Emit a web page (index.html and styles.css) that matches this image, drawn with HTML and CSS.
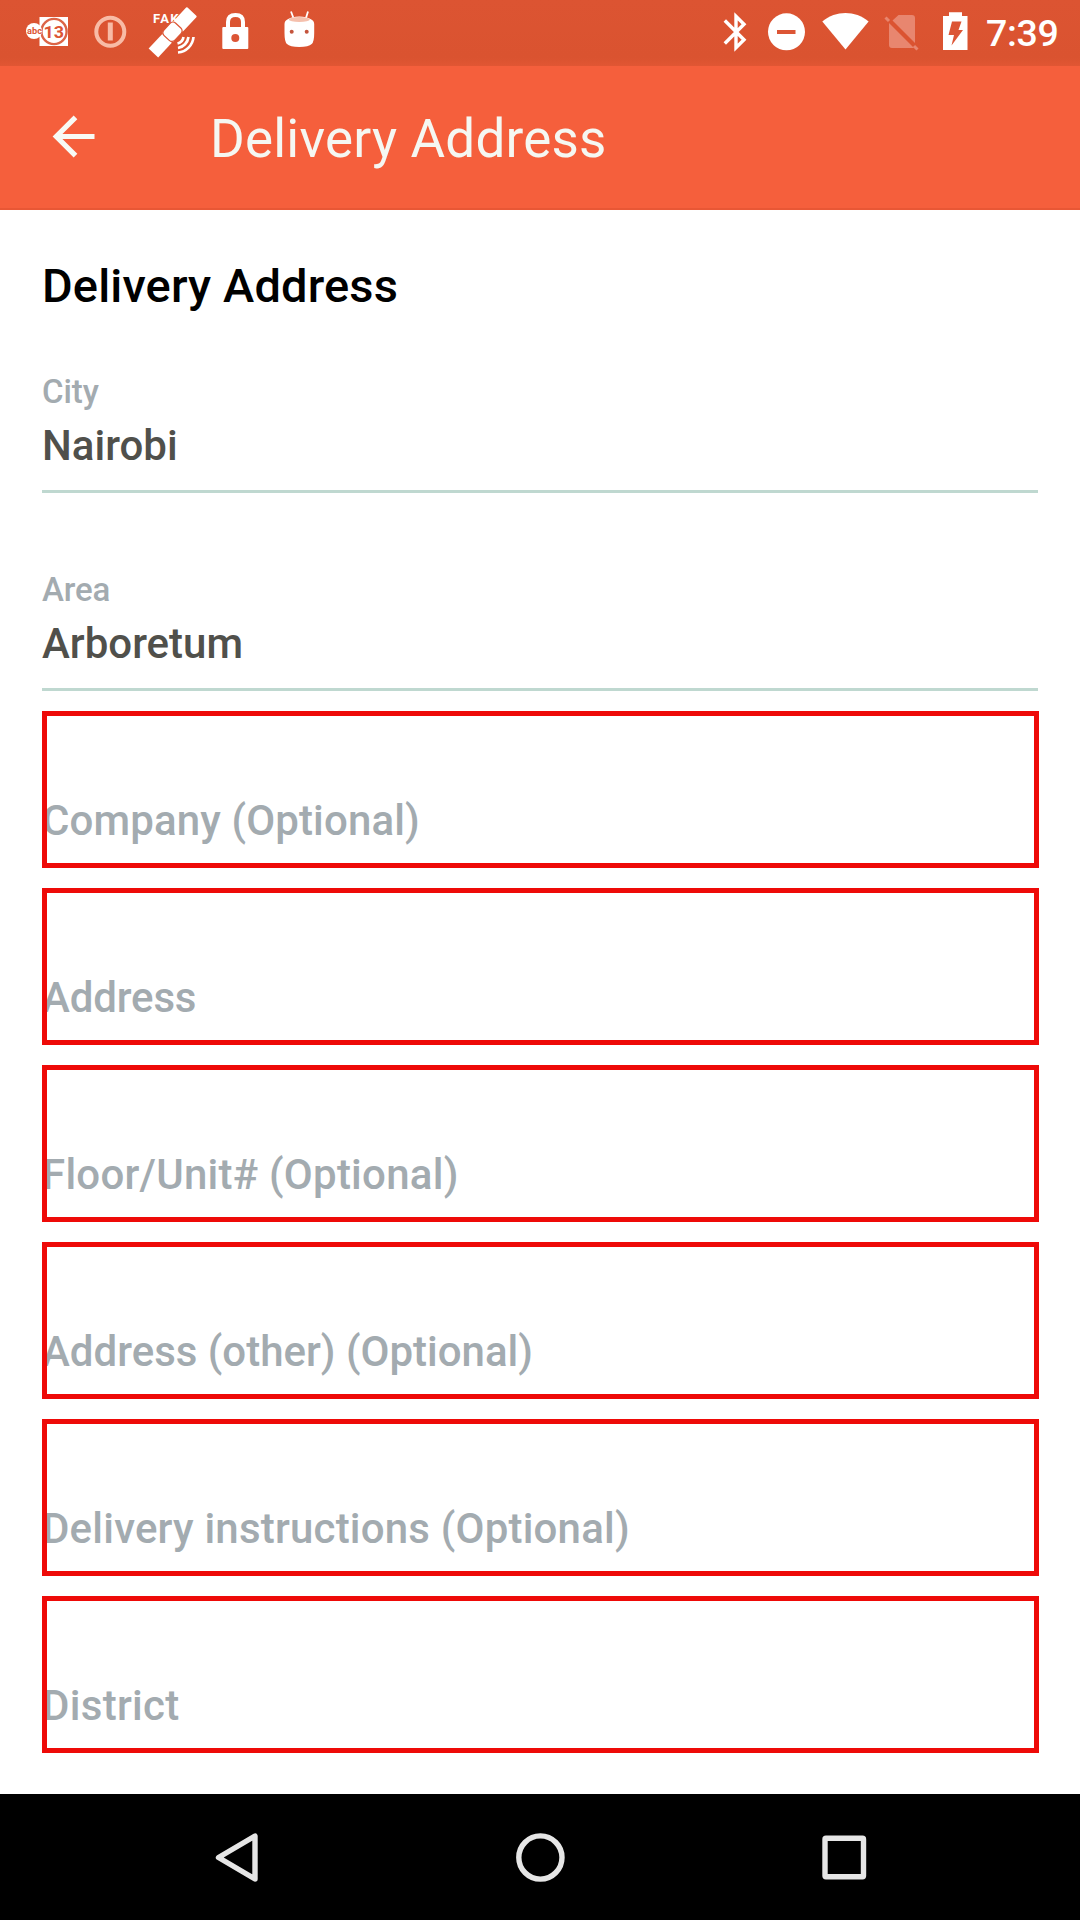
FILE: index.html
```html
<!DOCTYPE html>
<html lang="en">
<head>
<meta charset="utf-8">
<title>Delivery Address</title>
<link rel="stylesheet" href="styles.css">
</head>
<body>
<div class="screen">
  <div class="status-bar">
    <div class="status-group notifications">
      <svg width="60" height="66" viewBox="20 0 60 66">
        <rect x="39.5" y="17" width="28.5" height="29" fill="#fff"/>
        <circle cx="54" cy="31.5" r="12.6" fill="#fff" stroke="#dc6547" stroke-width="2.4"/>
        <circle cx="34" cy="31" r="8" fill="#fff"/>
        <text class="logo-abc" x="27" y="34" textLength="15" lengthAdjust="spacingAndGlyphs">abc</text>
        <text class="logo-num" x="43.500" y="37.5" textLength="20.500" lengthAdjust="spacingAndGlyphs">13</text>
      </svg>
      <svg width="60" height="66" viewBox="80 0 60 66" fill="none" stroke="#f8bba6">
        <circle cx="110.3" cy="31.7" r="14" stroke-width="4"/>
        <path d="M110.3 22.5v18" stroke-width="5"/>
      </svg>
      <svg width="65" height="66" viewBox="140 0 65 66">
        <text class="fake" x="153" y="23" textLength="34">FAKE</text>
        <g transform="translate(172.5 32.5) rotate(-47)">
          <rect x="-28" y="-6.500" width="20" height="13" fill="#fff"/>
          <rect x="7.500" y="-7" width="21" height="14" rx="1" fill="#fff"/>
          <rect x="-8" y="-8" width="17" height="15" rx="4" fill="#fff" stroke="#dc5535" stroke-width="1.200"/>
        </g>
        <path d="M177.500 43.500a8 8 0 0 0 6-6.500M178 48a13 13 0 0 0 10.500-11M178 52.500a17 17 0 0 0 15.500-15.500" fill="none" stroke="#fff" stroke-width="2.700"/>
      </svg>
      <svg width="60" height="66" viewBox="205 0 60 66">
        <path d="M228 29v-7q0-7 7.500-7t7.500 7v7" fill="none" stroke="#fff" stroke-width="4"/>
        <rect x="222.300" y="27" width="26" height="22" rx="1" fill="#fff"/>
        <circle cx="235.300" cy="38" r="4" fill="#dc5535"/>
      </svg>
      <svg width="70" height="66" viewBox="265 0 70 66">
        <path d="M291 11.500l3 8M308 11.500l-2.500 8" stroke="#fff" stroke-width="1.800"/>
        <path d="M284.500 24q0-6.500 14.800-7.500q14.900 1 14.900 7.500v9q0 9-2.500 11q-3 3-12.400 3t-12.300-3q-2.500-2-2.500-11z" fill="#fff"/>
        <ellipse cx="299.300" cy="19.500" rx="10.500" ry="2.600" fill="#f5c0ad"/>
        <circle cx="291.700" cy="31.700" r="2" fill="#c4543c"/><circle cx="306.700" cy="31.700" r="2" fill="#c4543c"/>
      </svg>
    </div>
    <div class="status-group">
      <svg width="45" height="66" viewBox="720 0 45 66" fill="none" stroke="#fff" stroke-width="3.400">
        <path d="M724.800 20.500L744 39.800L736 47.600V16.400L744 24.200L724.800 43.500"/>
      </svg>
      <svg width="50" height="66" viewBox="765 0 50 66">
        <circle cx="786.500" cy="31.800" r="18.500" fill="#fff"/><rect x="777" y="30" width="18.500" height="4" fill="#dc5535"/>
      </svg>
      <svg width="60" height="66" viewBox="815 0 60 66">
        <path d="M822.300 21.500C836 10.300 855 10.300 868.600 21.500L845.500 49.500z" fill="#fff"/>
      </svg>
      <svg width="55" height="66" viewBox="875 0 55 66">
        <path d="M898.500 15H912q3 0 3 3v25L892.500 20.500zM889 23L914 48H892q-3 0-3-3z" fill="#e8866f"/>
        <path d="M885.500 17.500L889 21M914 46L917.500 49.500" stroke="#e8866f" stroke-width="3"/>
      </svg>
      <svg width="55" height="66" viewBox="930 0 55 66">
        <path d="M949 12.300h13v3.700h5.500v34H943V16h6z" fill="#fff"/>
        <path d="M952 21.500h9.500l-3 8.500h4.500l-11.500 15.500l2.500-10.500h-5.500z" fill="#dc5535"/>
      </svg>
      <span class="clock">7:39</span>
    </div>
  </div>

  <header class="app-bar">
    <svg class="back" width="44" height="44" viewBox="0 0 44 44" fill="none" stroke="#f8faf5" stroke-width="5.200">
      <path d="M23.500 2.300L4.300 21.500L23.500 40.700M4 21.500h38.500"/>
    </svg>
    <h1 class="title">Delivery Address</h1>
  </header>

  <main class="content">
    <h2 class="heading">Delivery Address</h2>
    <div class="field"><span class="label">City</span><span class="value">Nairobi</span></div>
    <div class="field"><span class="label">Area</span><span class="value">Arboretum</span></div>
    <div class="inputs">
      <div class="input company">Company (Optional)</div>
      <div class="input address">Address</div>
      <div class="input floor">Floor/Unit# (Optional)</div>
      <div class="input">Address (other) (Optional)</div>
      <div class="input instructions">Delivery instructions (Optional)</div>
      <div class="input district">District</div>
    </div>
  </main>

  <nav class="nav-bar">
    <svg width="60" height="60" viewBox="206 1827 60 60"><path d="M218.500 1857.500L255 1836V1879z"/></svg>
    <svg width="60" height="60" viewBox="510 1827 60 60"><circle cx="540.400" cy="1857.500" r="21.600"/></svg>
    <svg width="60" height="60" viewBox="814 1827 60 60"><rect x="825" y="1838.300" width="38.500" height="38.500" rx="1"/></svg>
  </nav>
</div>
</body>
</html>
```
FILE: styles.css
```css
* { box-sizing: border-box; }
body { margin: 0; font-family: Roboto, "Liberation Sans", sans-serif; background: #fff; }
svg { display: block; flex: none; }
.screen { width: 1080px; height: 1920px; display: flex; flex-direction: column; overflow: hidden; }

.status-bar {
  height: 66px; padding: 0 20px; display: flex; justify-content: space-between;
  background: linear-gradient(#dc5432 0, #da5330 58px, #e15633 66px);
}
.status-group { display: flex; }
.clock { width: 75px; padding-left: 1px; color: #fff; font-size: 37.5px; font-weight: 500; line-height: 66px; letter-spacing: -0.3px; white-space: nowrap; }
.logo-abc { font-size: 9px; font-weight: 700; fill: #dc5535; }
.logo-num { font-size: 17px; font-weight: 700; fill: #dc5535; }
.fake { font-size: 13px; font-weight: 700; fill: #fff; }

.app-bar {
  height: 144px; padding-left: 52px; display: flex; align-items: center; gap: 114px;
  background: #f55f3c; border-bottom: 2px solid #e85735;
}
.title { margin: 4px 0 0; font-size: 53px; font-weight: 400; line-height: 64px; letter-spacing: 0.2px; color: #f5f7f2; }

.content { height: 1584px; padding: 48px 41px 0 42px; }
.heading { margin: 0; font-size: 47px; font-weight: 500; line-height: 56px; letter-spacing: 0.15px; color: #000; }
.field { display: flex; flex-direction: column; gap: 9px; margin: 58px 1px 0 0; padding-bottom: 19px; border-bottom: 3px solid #bfd8d0; }
.field + .field { margin-top: 77px; }
.label { font-size: 33px; font-weight: 500; line-height: 40px; letter-spacing: -0.1px; color: #a3abb0; }
.value { font-size: 42px; font-weight: 500; line-height: 50px; color: #50504b; }
.inputs { display: flex; flex-direction: column; gap: 20px; margin-top: 20px; }
.input {
  height: 157px; padding-top: 85px; font-size: 42px; font-weight: 500; line-height: 50px; color: #a3abb0;
  outline: 5px solid #ee0a08; outline-offset: -5px;
}
.company { letter-spacing: 0.13px; }
.address { letter-spacing: -0.15px; }
.floor { letter-spacing: 0.25px; }
.instructions { letter-spacing: 0.2px; }
.district { letter-spacing: 0.3px; }

.nav-bar { height: 126px; display: flex; align-items: center; justify-content: center; gap: 244px; background: #000; }
.nav-bar svg { fill: none; stroke: #e6e6e6; stroke-width: 5.400px; stroke-linejoin: round; }
```
